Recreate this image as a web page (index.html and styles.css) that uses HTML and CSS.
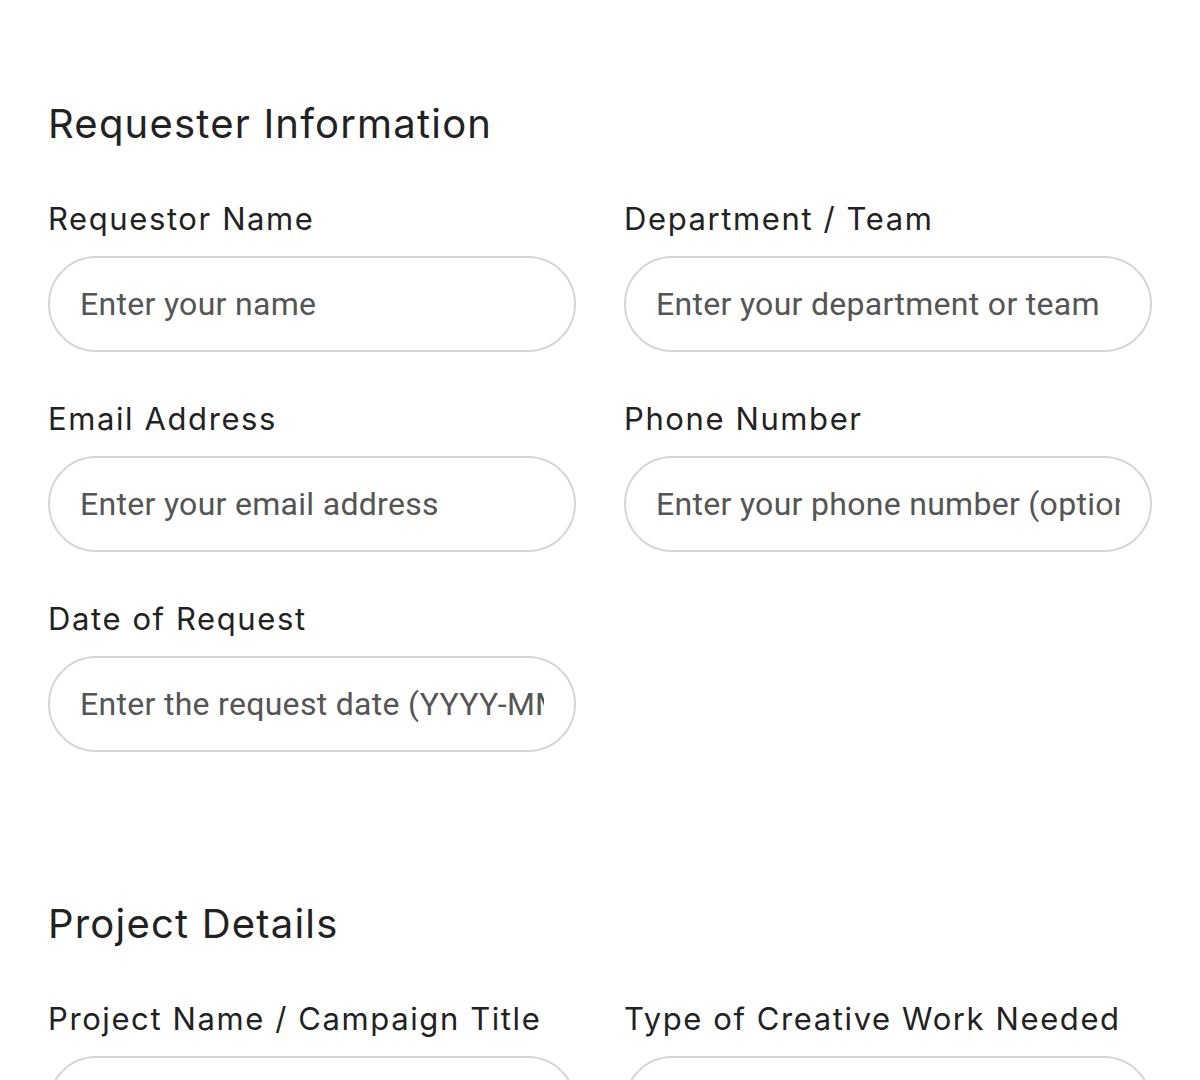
FILE: index.html
```html
<!DOCTYPE html>
<html lang="en">
<head>
  <meta charset="UTF-8" />
  <meta name="viewport" content="width=device-width, initial-scale=1.0" />
  <title>Creative Request Form</title>
  <link rel="stylesheet" href="styles.css">
</head>
<body>
  <main class="page">
    <section class="section">
      <h2 class="section-title">Requester Information</h2>
      <div class="fields">
        <div class="field">
          <label for="name">Requestor Name</label>
          <input type="text" id="name" placeholder="Enter your name" />
        </div>
        <div class="field">
          <label for="team">Department / Team</label>
          <input type="text" id="team" placeholder="Enter your department or team" />
        </div>
        <div class="field">
          <label for="email">Email Address</label>
          <input type="email" id="email" placeholder="Enter your email address" />
        </div>
        <div class="field">
          <label for="phone">Phone Number</label>
          <input type="tel" id="phone" placeholder="Enter your phone number (optional)" />
        </div>
        <div class="field">
          <label for="date">Date of Request</label>
          <input type="text" id="date" placeholder="Enter the request date (YYYY-MM-DD)" />
        </div>
      </div>
    </section>

    <section class="section">
      <h2 class="section-title">Project Details</h2>
      <div class="fields">
        <div class="field">
          <label for="project">Project Name / Campaign Title</label>
          <input type="text" id="project" placeholder="Enter the project or campaign title" />
        </div>
        <div class="field">
          <label for="type">Type of Creative Work Needed</label>
          <input type="text" id="type" placeholder="Enter the type of creative work" />
        </div>
      </div>
    </section>
  </main>
</body>
</html>
```

FILE: styles.css
```css
body {
  margin: 0;
  background: #ffffff;
  color: #222222;
  font-family: Inter, "Open Sans", sans-serif;
}

.page {
  padding: 94px 48px 0;
  display: flex;
  flex-direction: column;
  gap: 142px;
}

.section-title {
  margin: 0 0 43px;
  font-size: 40px;
  font-weight: 400;
  line-height: 60px;
  letter-spacing: 1.2px;
  color: #222222;
}

.fields {
  display: grid;
  grid-template-columns: 1fr 1fr;
  column-gap: 48px;
  row-gap: 45px;
}

.field label {
  display: block;
  margin-bottom: 15px;
  font-size: 31px;
  line-height: 44px;
  letter-spacing: 1.6px;
  color: #222222;
}

.field input {
  box-sizing: border-box;
  width: 100%;
  height: 96px;
  padding: 0 30px;
  border: 2px solid #d6d6d6;
  border-radius: 48px;
  background: #ffffff;
  font-family: Roboto, "Noto Sans", sans-serif;
  font-size: 32px;
  letter-spacing: 0.3px;
  color: #333333;
  outline: none;
}

.field input::placeholder {
  color: #555555;
}
```
